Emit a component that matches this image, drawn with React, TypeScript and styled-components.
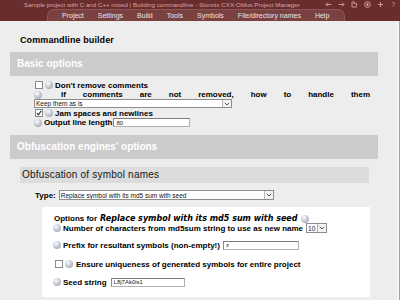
import React from 'react'
import styled, { createGlobalStyle } from 'styled-components'

const GlobalStyle = createGlobalStyle`
  html, body {
    margin: 0;
    padding: 0;
  }
  body {
    width: 400px;
    height: 300px;
    overflow: hidden;
    background: #ededed;
    font-family: "Liberation Sans", Arial, sans-serif;
    color: #000;
  }
`

const Window = styled.div`
  width: 400px;
  height: 300px;
  display: flex;
  flex-direction: column;
  overflow: hidden;
`

const TitleBar = styled.div`
  height: 21px;
  flex-shrink: 0;
  background: #6a2d2d;
  display: flex;
  flex-direction: column;
`

const TitleLine = styled.div`
  height: 9px;
  display: flex;
  align-items: center;
  padding: 0 3px 0 24px;
  font-size: 6.2px;
  line-height: 9px;
  color: #d6a4a4;
  white-space: nowrap;
`

const TitleText = styled.span`
  flex: 1;
`

const WinIcons = styled.div`
  display: flex;
  align-items: center;
  gap: 6px;
`

const MenuRow = styled.div`
  height: 12px;
  padding-left: 47px;
  display: flex;
`

const MenuTab = styled.nav`
  width: 298px;
  box-sizing: border-box;
  background: #7a4141;
  border: 1px solid #8c5656;
  border-bottom: none;
  border-radius: 7px 7px 0 0;
  display: flex;
  align-items: center;
  gap: 14px;
  padding-left: 14px;
  font-size: 7px;
  color: #eee2e2;
`

const MenuItem = styled.span`
  white-space: nowrap;
`

const Body = styled.div`
  flex: 1;
  display: flex;
`

const Main = styled.main`
  flex: 1;
  padding: 0 19px 0 10px;
`

const RightEdge = styled.div`
  width: 3px;
  box-sizing: border-box;
  background: #f4f4f4;
  border-right: 1px solid #a4a4a4;
`

const PageTitle = styled.h1`
  margin: 13px 0 6px 10px;
  font-size: 9px;
  line-height: 12px;
  font-weight: bold;
  letter-spacing: 0.1px;
`

const Band = styled.div`
  height: 24px;
  background: #cbcbcb;
  color: #fff;
  font-size: 10px;
  font-weight: bold;
  line-height: 24px;
  padding-left: 7px;
`

const BasicSection = styled.section`
  padding: 4px 8px 8px 24px;
`

const Row = styled.div<{ $h?: number; $mt?: number; $pl?: number }>`
  display: flex;
  align-items: center;
  height: ${p => p.$h ?? 10}px;
  margin-top: ${p => p.$mt ?? 0}px;
  padding-left: ${p => p.$pl ?? 0}px;
  font-size: 8px;
  font-weight: bold;
  white-space: nowrap;
`

const Justified = styled.div`
  text-align: justify;
  font-size: 8px;
  font-weight: bold;
  line-height: 9px;
`

const Check = styled.span<{ $ml?: number }>`
  display: inline-flex;
  align-items: center;
  justify-content: center;
  width: 8px;
  height: 8px;
  box-sizing: border-box;
  border: 1px solid #8a8a8a;
  background: #fff;
  margin: 0 2px 0 ${p => p.$ml ?? 1}px;
`

const Info = styled.span<{ $mr?: number; $ml?: number }>`
  display: inline-block;
  vertical-align: middle;
  width: 8px;
  height: 8px;
  border-radius: 50%;
  background: radial-gradient(circle at 38% 32%, #ffffff 0%, #d2d7df 35%, #8e98a8 100%);
  margin: 0 ${p => p.$mr ?? 2}px 0 ${p => p.$ml ?? 0}px;
  flex-shrink: 0;
`

const SelectBox = styled.span<{ $w: number; $h?: number }>`
  display: inline-flex;
  vertical-align: top;
  width: ${p => p.$w}px;
  height: ${p => p.$h ?? 9}px;
  box-sizing: border-box;
  border: 1px solid #8d8d8d;
  background: #fff;
  font-size: 6.5px;
  font-weight: normal;
  color: #111;
  text-align: left;
  flex-shrink: 0;
`

const SelectText = styled.span`
  flex: 1;
  padding-left: 1px;
  display: flex;
  align-items: center;
  overflow: hidden;
  white-space: nowrap;
`

const Arrow = styled.span`
  width: 8px;
  display: flex;
  align-items: center;
  justify-content: center;
  border-left: 1px solid #b5b5b5;
  background: #f3f3f3;
`

const TextInput = styled.input<{ $w: number; $ml?: number }>`
  width: ${p => p.$w}px;
  height: 9px;
  box-sizing: border-box;
  margin: 0 0 0 ${p => p.$ml ?? 2}px;
  padding: 0 2px;
  border: 1px solid #b0b0b0;
  border-top-color: #7c7c7c;
  border-left-color: #8a8a8a;
  background: #fff;
  font-family: "Liberation Sans", Arial, sans-serif;
  font-size: 6px;
  color: #222;
  outline: none;
`

const SubBand = styled.div`
  margin: 8px 9px 0 10px;
  height: 16px;
  background: #dcdcdc;
  color: #161616;
  font-size: 10px;
  line-height: 16px;
  padding-left: 2px;
  letter-spacing: 0.2px;
`

const TypeRow = styled.div`
  display: flex;
  align-items: center;
  gap: 3px;
  height: 10px;
  margin-top: 7px;
  padding-left: 25px;
  font-size: 8px;
  font-weight: bold;
`

const OptionsBox = styled.div`
  margin: 7px 0 0 32px;
  width: 328px;
  height: 90px;
  background: #fff;
  padding-top: 7px;
  box-sizing: border-box;
`

const OptionsHead = styled.div`
  display: flex;
  align-items: center;
  height: 9px;
  padding-left: 12px;
  font-size: 8px;
  font-weight: bold;
  white-space: nowrap;
`

const Emph = styled.em`
  font-family: "DejaVu Sans", Verdana, sans-serif;
  font-size: 8px;
  font-weight: bold;
  font-style: italic;
  margin: 0 3px 0 3px;
`

const Spacer = styled.span<{ $w: number }>`
  width: ${p => p.$w}px;
  flex-shrink: 0;
`

const Chevron = () => (
  <svg width="6" height="4" viewBox="0 0 6 4">
    <path d="M0.8 0.8 L3 3 L5.2 0.8" fill="none" stroke="#555" strokeWidth="1" />
  </svg>
)

const Tick = () => (
  <svg width="6" height="6" viewBox="0 0 6 6">
    <path d="M0.8 3 L2.4 4.8 L5.3 0.8" fill="none" stroke="#222" strokeWidth="1.1" />
  </svg>
)

const WinIcon = ({ kind }: { kind: string }) => {
  const c = '#d6a4a4'
  return (
    <svg width="7" height="7" viewBox="0 0 7 7" fill="none" stroke={c} strokeWidth="0.9">
      {kind === 'back' && <path d="M6.5 3.5 H1 M3 1.5 L1 3.5 L3 5.5" />}
      {kind === 'fwd' && <path d="M0.5 3.5 H6 M4 1.5 L6 3.5 L4 5.5" />}
      {kind === 'home' && <path d="M1 1 V6 H6 M1 1 H4 M2.5 2.5 H5.5 V5" />}
      {kind === 'zoom' && (
        <>
          <circle cx="3.5" cy="3.5" r="2.9" />
          <path d="M3.5 1.8 V5.2 M1.8 3.5 H5.2" />
        </>
      )}
      {kind === 'plus' && <path d="M3.5 1 V6 M1 3.5 H6" />}
      {kind === 'help' && (
        <text x="1.6" y="6" fontSize="6.5" fill={c} stroke="none" fontFamily="Liberation Sans, sans-serif">?</text>
      )}
    </svg>
  )
}

const Select = ({ w, h, value }: { w: number; h?: number; value: string }) => (
  <SelectBox $w={w} $h={h}>
    <SelectText>{value}</SelectText>
    <Arrow>
      <Chevron />
    </Arrow>
  </SelectBox>
)

const menu = ['Project', 'Settings', 'Build', 'Tools', 'Symbols', 'File/directory names', 'Help']

export default function App() {
  return (
    <>
      <GlobalStyle />
      <Window>
        <TitleBar>
          <TitleLine>
            <TitleText>
              Sample project with C and C++ mixed | Building commandline - Stunnix CXX-Obfus Project Manager
            </TitleText>
            <WinIcons>
              {['back', 'fwd', 'home', 'zoom', 'plus', 'help'].map(k => (
                <WinIcon key={k} kind={k} />
              ))}
            </WinIcons>
          </TitleLine>
          <MenuRow>
            <MenuTab>
              {menu.map(m => (
                <MenuItem key={m}>{m}</MenuItem>
              ))}
            </MenuTab>
          </MenuRow>
        </TitleBar>

        <Body>
          <Main>
            <PageTitle>Commandline builder</PageTitle>
            <Band>Basic options</Band>
            <BasicSection>
              <Row>
                <Check />
                <Info />
                Don't remove comments
              </Row>
              <Justified>
                <Info /> If comments are not removed, how to handle them{' '}
                <Select w={198} value="Keep them as is" />
              </Justified>
              <Row>
                <Check>
                  <Tick />
                </Check>
                <Info />
                Jam spaces and newlines
              </Row>
              <Row $h={9}>
                <Info />
                Output line length
                <TextInput $w={77} $ml={1} defaultValue="80" />
              </Row>
            </BasicSection>

            <Band>Obfuscation engines' options</Band>
            <SubBand>Obfuscation of symbol names</SubBand>
            <TypeRow>
              Type:
              <Select w={215} h={10} value="Replace symbol with its md5 sum with seed" />
            </TypeRow>

            <OptionsBox>
              <OptionsHead>
                Options for<Emph>Replace symbol with its md5 sum with seed</Emph>
                <Info />
              </OptionsHead>
              <Row $pl={11}>
                <Info />
                Number of characters from md5sum string to use as new name
                <Spacer $w={3} />
                <Select w={21} h={10} value="10" />
              </Row>
              <Row $mt={7} $pl={11}>
                <Info />
                Prefix for resultant symbols (non-empty!)
                <TextInput $w={76} $ml={3} defaultValue="z" />
              </Row>
              <Row $mt={9} $pl={11}>
                <Check $ml={2} />
                <Info $mr={3} />
                Ensure uniqueness of generated symbols for entire project
              </Row>
              <Row $mt={8} $pl={11}>
                <Info />
                Seed string
                <TextInput $w={74} $ml={4} defaultValue="L8j7Ak0is1" />
              </Row>
            </OptionsBox>
          </Main>
          <RightEdge />
        </Body>
      </Window>
    </>
  )
}
